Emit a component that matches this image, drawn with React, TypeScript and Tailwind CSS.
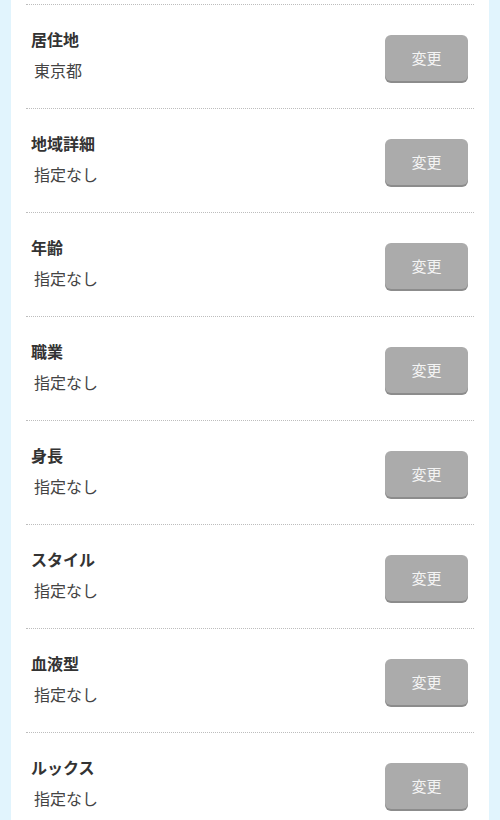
const rows = [
  { label: "居住地", value: "東京都" },
  { label: "地域詳細", value: "指定なし" },
  { label: "年齢", value: "指定なし" },
  { label: "職業", value: "指定なし" },
  { label: "身長", value: "指定なし" },
  { label: "スタイル", value: "指定なし" },
  { label: "血液型", value: "指定なし" },
  { label: "ルックス", value: "指定なし" },
]

export default function App() {
  return (
    <div
      className="min-h-screen bg-[#e1f4fd] px-[11px] overflow-hidden"
      style={{ fontFamily: '"Noto Sans CJK JP", "Noto Sans", sans-serif' }}
    >
      <div className="bg-white px-[15px] pt-[4px] h-[820px]">
        {rows.map((row) => (
          <div
            key={row.label}
            className="h-[104px] border-t border-dotted border-[#bdbdbd] flex justify-between items-start"
          >
            <div className="pt-[22px] pl-[5px]">
              <div className="text-[16px] leading-[24px] font-bold text-[#333]">{row.label}</div>
              <div className="mt-[7px] ml-[3px] text-[16px] leading-[24px] text-[#444]">{row.value}</div>
            </div>
            <button className="mt-[30px] mr-[6px] w-[83px] h-[46px] rounded-[6px] bg-[#ababab] shadow-[0_2px_0_#8c8c8c] text-[15px] text-[#f4f4f4]">
              変更
            </button>
          </div>
        ))}
      </div>
    </div>
  )
}
